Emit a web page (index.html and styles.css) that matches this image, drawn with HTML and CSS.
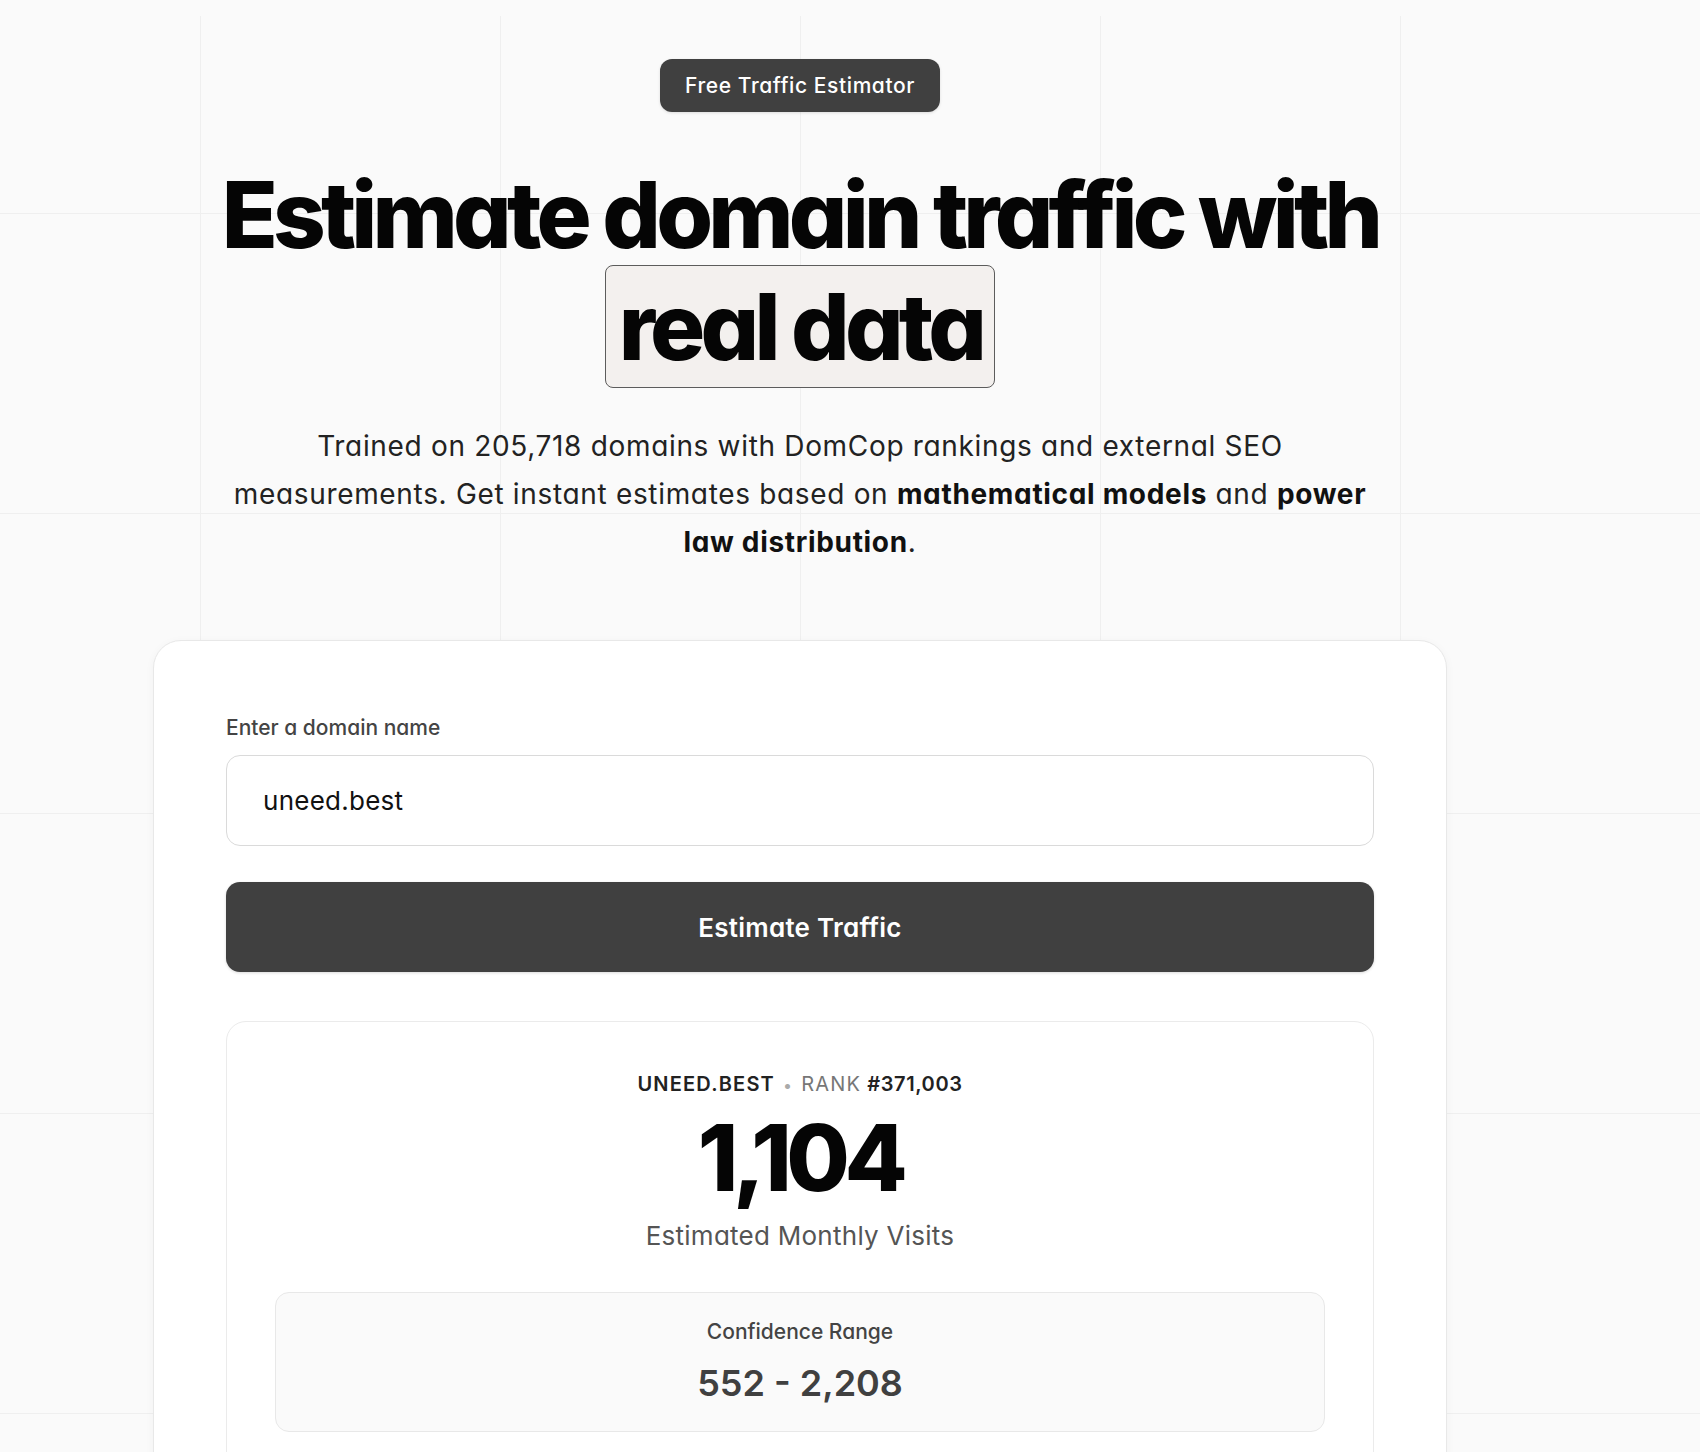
FILE: index.html
```html
<!DOCTYPE html>
<html lang="en">
<head>
<meta charset="utf-8">
<title>Free Traffic Estimator</title>
<link rel="stylesheet" href="styles.css">
</head>
<body>
<main class="page">
  <section class="hero">
    <span class="badge">Free Traffic Estimator</span>
    <h1 class="title">Estimate domain traffic with <span class="highlight">real data</span></h1>
    <p class="lead">Trained on 205,718 domains with DomCop rankings and external SEO measurements. Get instant estimates based on <strong>mathematical models</strong> and <strong>power law distribution</strong>.</p>
  </section>

  <section class="card">
    <form class="form">
      <label class="label" for="domain">Enter a domain name</label>
      <input class="input" id="domain" type="text" value="uneed.best">
      <button class="button" type="button">Estimate Traffic</button>
    </form>

    <div class="result">
      <div class="meta">
        <span class="meta-domain">UNEED.BEST</span>
        <span class="meta-dot">•</span>
        <span class="meta-rank">RANK</span>
        <span class="meta-rank-value">#371,003</span>
      </div>
      <div class="visits">1,104</div>
      <div class="visits-label">Estimated Monthly Visits</div>

      <div class="range">
        <div class="range-label">Confidence Range</div>
        <div class="range-value">552 - 2,208</div>
      </div>
    </div>
  </section>
</main>
</body>
</html>
```

FILE: styles.css
```css
* {
  box-sizing: border-box;
}

html, body {
  margin: 0;
  padding: 0;
}

body {
  min-height: 1452px;
  background-color: #fafafa;
  background-image:
    linear-gradient(to right, #efefef 0, #efefef 1px, transparent 1px),
    linear-gradient(to bottom, #efefef 0, #efefef 1px, transparent 1px);
  background-size: 300px 100%, 100% 300px;
  background-position: 200px 16px, 0 213px;
  background-repeat: repeat-x, repeat-y;
  font-family: "Inter", "Noto Sans", sans-serif;
  font-feature-settings: "cv11";
  color: #111;
  overflow: hidden;
}

.page {
  width: 1600px;
  display: flex;
  flex-direction: column;
  align-items: center;
  padding-top: 59px;
}

.hero {
  display: flex;
  flex-direction: column;
  align-items: center;
  text-align: center;
}

.badge {
  display: inline-flex;
  align-items: center;
  height: 53px;
  padding: 0 25px;
  border-radius: 12px;
  background: #404040;
  color: #fff;
  font-size: 21px;
  font-weight: 500;
  letter-spacing: 0.028em;
  box-shadow: 0 1px 3px rgba(0, 0, 0, 0.12);
}

.title {
  max-width: 1200px;
  margin: 47px 0 0;
  font-size: 92px;
  line-height: 112px;
  font-weight: 800;
  letter-spacing: -0.052em;
  color: #050505;
}

.highlight {
  padding: 5px 12px 5px 13px;
  border: 1px solid #5c5c5c;
  border-radius: 8px;
  background: #f3f0ee;
}

.lead {
  max-width: 1145px;
  margin: 39px 0 0;
  font-size: 28px;
  line-height: 48px;
  letter-spacing: 0.024em;
  color: #222;
}

.lead strong {
  font-weight: 700;
  color: #111;
}

.card {
  width: 1294px;
  margin-top: 74px;
  padding: 73px 72px 72px;
  background: #fff;
  border: 1px solid #e8e8e8;
  border-radius: 28px;
  box-shadow: 0 2px 10px rgba(0, 0, 0, 0.04);
}

.form {
  display: flex;
  flex-direction: column;
  margin: 0;
}

.label {
  font-size: 21px;
  line-height: 28px;
  font-weight: 500;
  color: #444;
  margin-bottom: 13px;
}

.input {
  height: 91px;
  padding: 0 36px;
  border: 1px solid #dadada;
  border-radius: 14px;
  background: #fff;
  font-family: inherit;
  font-feature-settings: "cv11";
  font-size: 26px;
  letter-spacing: 0.01em;
  color: #111;
  outline: none;
}

.button {
  margin-top: 36px;
  height: 90px;
  border: 0;
  border-radius: 14px;
  background: #404040;
  color: #fff;
  font-family: inherit;
  font-feature-settings: "cv11";
  font-size: 26px;
  font-weight: 600;
  letter-spacing: 0.01em;
  box-shadow: 0 1px 3px rgba(0, 0, 0, 0.15);
}

.result {
  margin-top: 49px;
  padding: 48px 48px 60px;
  border: 1px solid #ebebeb;
  border-radius: 20px;
  display: flex;
  flex-direction: column;
  align-items: center;
  text-align: center;
}

.meta {
  font-size: 20px;
  line-height: 28px;
  display: flex;
  gap: 8px;
  align-items: baseline;
  letter-spacing: 0.06em;
}

.meta-domain {
  font-weight: 600;
  color: #222;
}

.meta-dot {
  color: #aaa;
  font-size: 16px;
}

.meta-rank {
  color: #777;
  margin-right: -2px;
}

.meta-rank-value {
  font-weight: 600;
  color: #222;
  letter-spacing: 0.03em;
}

.visits {
  margin-top: 8px;
  font-size: 92px;
  line-height: 101px;
  font-weight: 800;
  letter-spacing: -0.06em;
  color: #050505;
}

.visits-label {
  margin-top: 10px;
  font-size: 26px;
  line-height: 36px;
  letter-spacing: 0.01em;
  color: #555;
}

.range {
  align-self: stretch;
  margin-top: 38px;
  padding: 25px 24px 26px;
  background: #fafafa;
  border: 1px solid #e8e8e8;
  border-radius: 14px;
  display: flex;
  flex-direction: column;
  align-items: center;
}

.range-label {
  font-size: 21px;
  line-height: 28px;
  font-weight: 500;
  color: #444;
}

.range-value {
  margin-top: 15px;
  font-size: 36px;
  line-height: 44px;
  font-weight: 600;
  color: #404040;
}
```
